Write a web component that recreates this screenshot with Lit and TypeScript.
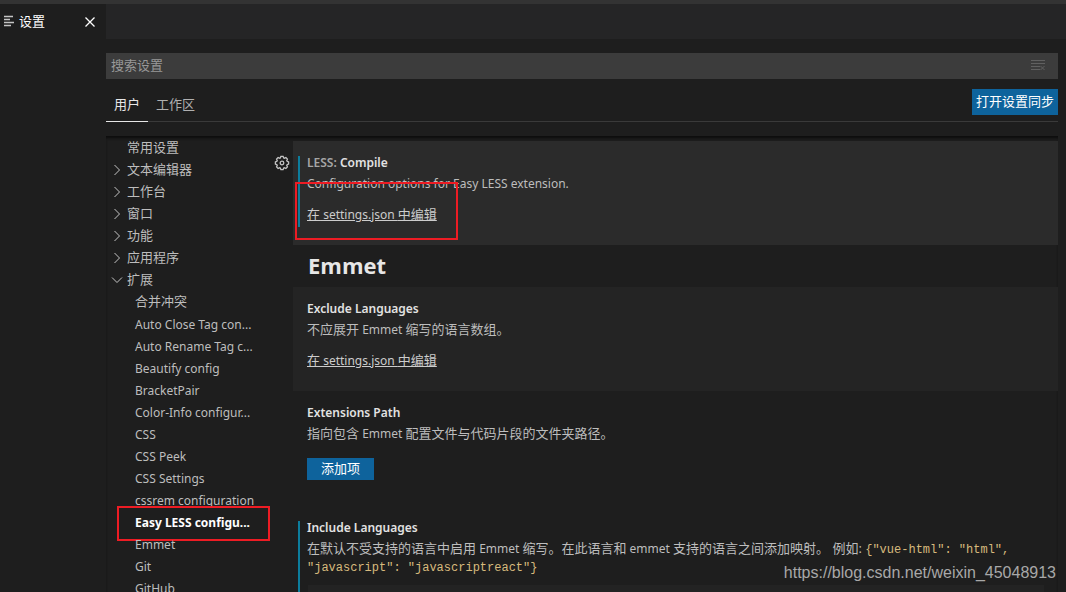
import { LitElement, html, svg, css } from "lit";
import { customElement } from "lit/decorators.js";

interface TocEntry {
  label: string;
  kind: "plain" | "closed" | "open" | "child";
  latin?: boolean;
  active?: boolean;
}

const TOC: TocEntry[] = [
  { label: "常用设置", kind: "plain" },
  { label: "文本编辑器", kind: "closed" },
  { label: "工作台", kind: "closed" },
  { label: "窗口", kind: "closed" },
  { label: "功能", kind: "closed" },
  { label: "应用程序", kind: "closed" },
  { label: "扩展", kind: "open" },
  { label: "合并冲突", kind: "child" },
  { label: "Auto Close Tag con...", kind: "child", latin: true },
  { label: "Auto Rename Tag c...", kind: "child", latin: true },
  { label: "Beautify config", kind: "child", latin: true },
  { label: "BracketPair", kind: "child", latin: true },
  { label: "Color-Info configur...", kind: "child", latin: true },
  { label: "CSS", kind: "child", latin: true },
  { label: "CSS Peek", kind: "child", latin: true },
  { label: "CSS Settings", kind: "child", latin: true },
  { label: "cssrem configuration", kind: "child", latin: true },
  { label: "Easy LESS configu...", kind: "child", latin: true, active: true },
  { label: "Emmet", kind: "child", latin: true },
  { label: "Git", kind: "child", latin: true },
  { label: "GitHub", kind: "child", latin: true },
];

const chevron = (open: boolean) => html`
  <svg class="chevron" viewBox="0 0 16 16" width="16" height="16" aria-hidden="true">
    ${open
      ? svg`<path d="M3 6.5l5 5 5-5" />`
      : svg`<path d="M5.5 4l5 5-5 5" />`}
  </svg>
`;

const teeth = [0, 45, 90, 135, 180, 225, 270, 315];

const gear = html`
  <svg viewBox="0 0 16 16" width="16" height="16" fill="none" stroke="currentColor" stroke-width="1.3" aria-hidden="true">
    ${teeth.map(
      (a) => svg`<path transform="rotate(${a} 8 8)" d="M6.1 3.4L6.9 1.4H9.1L9.9 3.4" />`
    )}
    <circle cx="8" cy="8" r="1.8" />
  </svg>
`;

@customElement("app-root")
export class AppRoot extends LitElement {
  static styles = css`
    :host {
      display: flex;
      flex-direction: column;
      position: relative;
      height: 100vh;
      overflow: hidden;
      background: #1e1e1e;
      color: #bdbdbd;
      font: 13px/18px "Open Sans", "Noto Sans CJK SC", sans-serif;
    }
    * { box-sizing: border-box; }
    button, input { font: inherit; border: 0; margin: 0; }
    button { cursor: pointer; }
    .latin { font-family: "Noto Sans", sans-serif; font-size: 12px; line-height: 1; }
    .titlebar { flex: none; height: 4px; background: #333333; }
    .tabs { flex: none; display: flex; height: 35px; background: #252526; }
    .tab {
      display: flex;
      align-items: center;
      width: 106px;
      padding: 0 8px 2px 3px;
      gap: 4px;
      background: #1e1e1e;
      color: #ffffff;
    }
    .tab-name { flex: 1; }
    .icon-button {
      display: flex;
      padding: 0;
      background: none;
      color: inherit;
    }
    .editor {
      flex: 1;
      min-height: 0;
      display: flex;
      flex-direction: column;
      padding: 14px 8px 0 106px;
    }
    .search {
      flex: none;
      display: flex;
      align-items: center;
      height: 26px;
      padding: 0 12px 2px 5px;
      background: #3c3c3c;
      color: #606060;
    }
    .search input {
      flex: 1;
      min-width: 0;
      padding: 0;
      background: none;
      outline: none;
      color: #cccccc;
    }
    .search input::placeholder { color: #989898; opacity: 1; }
    .scopes {
      flex: none;
      display: flex;
      align-items: flex-end;
      height: 43px;
      border-bottom: 1px solid #3a3a3a;
    }
    .scope {
      height: 33px;
      margin-bottom: -1px;
      padding: 0 8px 2px;
      background: none;
      color: #b0b0b0;
      border-bottom: 1px solid transparent;
    }
    .scope.on { color: #e7e7e7; border-bottom-color: #e7e7e7; }
    .primary { padding-top: 0; padding-bottom: 2px; background: #0e639c; color: #ffffff; }
    .sync {
      height: 26px;
      margin: 0 0 6px auto;
      padding-left: 4px;
      padding-right: 4px;
    }
    .body {
      flex: 1;
      min-height: 0;
      display: grid;
      grid-template-columns: 187px minmax(0, 1fr);
      margin-top: 14px;
      overflow: hidden;
      box-shadow: inset 0 3px 3px -1px #0c0c0c;
    }
    .toc {
      margin: 0;
      padding: 0 32px 0 3px;
      list-style: none;
    }
    .toc-row {
      position: relative;
      display: flex;
      align-items: center;
      height: 22px;
      gap: 2px;
    }
    .toc-row.plain { padding-left: 18px; }
    .toc-row.child { padding-left: 26px; }
    .toc-row.active { color: #ffffff; font-weight: 700; }
    .toc-label { white-space: nowrap; }
    .toc-label.latin { line-height: 18px; padding-top: 3px; }
    .chevron { flex: none; fill: none; stroke: #c5c5c5; stroke-width: 1; }
    .settings { padding-top: 5px; }
    .setting {
      position: relative;
      padding: 12px 14px 22px;
    }
    .setting.focused { background: #2b2b2b; }
    .setting.hovered { background: #242424; }
    .modified::before {
      content: "";
      position: absolute;
      left: 5px;
      top: 15px;
      bottom: 18px;
      width: 2px;
      background: #0c7d9d;
    }
    .gear {
      position: absolute;
      left: -19px;
      top: 14px;
      color: #c5c5c5;
    }
    h3 {
      margin: 0;
      font: 600 12px/20px "Noto Sans", sans-serif;
      color: #e2e2e2;
    }
    .category { color: #a6a6a6; }
    h2 {
      margin: 0;
      padding: 0 0 2px 15px;
      font-size: 22px;
      line-height: 40px;
      font-weight: 700;
      color: #e7e7e7;
    }
    p { margin: 1px 0 0; }
    .edit {
      display: table;
      margin-top: 13px;
      color: #cccccc;
      text-decoration: underline;
    }
    .add {
      display: block;
      height: 22px;
      margin-top: 16px;
      padding-left: 14px;
      padding-right: 14px;
    }
    .tall { padding-bottom: 26px; }
    code {
      font: 12px/1 "Liberation Mono", monospace;
      color: #d7ba7d;
    }
    .pairs {
      width: calc(100% - 1px);
      margin: 10px 0 0 1px;
      table-layout: fixed;
      border-collapse: collapse;
      background: #232323;
      line-height: 26px;
    }
    .pairs th { padding: 0 4px; text-align: left; }
    .pairs .key { width: 40%; }
    .mark {
      position: absolute;
      border: 2px solid #ed1c24;
      pointer-events: none;
    }
    .mark-edit { left: 2px; top: 41px; width: 163px; height: 58px; }
    .mark-toc { left: 8px; top: -4px; width: 153px; height: 35px; }
    .watermark {
      position: absolute;
      right: 10px;
      bottom: 9px;
      font: 16px/20px "Liberation Sans", Arial, sans-serif;
      color: #a8a8a8;
    }
  `;

  private tocRow(entry: TocEntry) {
    const branch = entry.kind === "closed" || entry.kind === "open";
    return html`
      <li class="toc-row ${entry.kind} ${entry.active ? "active" : ""}">
        ${branch ? chevron(entry.kind === "open") : ""}
        <span class="toc-label ${entry.latin ? "latin" : ""}">${entry.label}</span>
        ${entry.active ? html`<span class="mark mark-toc"></span>` : ""}
      </li>
    `;
  }

  render() {
    return html`
      <div class="titlebar"></div>
      <div class="tabs">
        <div class="tab">
          <svg width="12" height="12" viewBox="0 0 12 12" stroke="#c5c5c5" stroke-width="1.3" aria-hidden="true">
            <path d="M1 1.5h9M1 4.5h6M1 7.5h10M1 10.5h7" />
          </svg>
          <span class="tab-name">设置</span>
          <button class="icon-button" aria-label="关闭">
            <svg width="16" height="16" viewBox="0 0 16 16" stroke="#ffffff" stroke-width="1.3">
              <path d="M3.5 4.5l9 9M12.5 4.5l-9 9" />
            </svg>
          </button>
        </div>
      </div>
      <main class="editor">
        <div class="search">
          <input type="text" placeholder="搜索设置" aria-label="搜索设置" />
          <button class="icon-button" aria-label="清除设置搜索输入">
            <svg width="16" height="16" viewBox="0 0 16 16" fill="none" stroke="currentColor">
              <path d="M1 3.5h14M1 6.5h14M1 9.5h9M1 12.5h9M10.5 9l4 4M14.5 9l-4 4" />
            </svg>
          </button>
        </div>
        <div class="scopes">
          <button class="scope on">用户</button>
          <button class="scope">工作区</button>
          <button class="primary sync">打开设置同步</button>
        </div>
        <div class="body">
          <ul class="toc">
            ${TOC.map((e) => this.tocRow(e))}
          </ul>
          <div class="settings">
            <section class="setting focused modified">
              <button class="icon-button gear" aria-label="更多操作">${gear}</button>
              <h3><span class="category">LESS:</span> Compile</h3>
              <p><span class="latin">Configuration options for Easy LESS extension.</span></p>
              <a class="edit" href="#">在<span class="latin"> settings.json </span>中编辑</a>
              <span class="mark mark-edit"></span>
            </section>
            <h2>Emmet</h2>
            <section class="setting hovered">
              <h3>Exclude Languages</h3>
              <p>不应展开<span class="latin"> Emmet </span>缩写的语言数组。</p>
              <a class="edit" href="#">在<span class="latin"> settings.json </span>中编辑</a>
            </section>
            <section class="setting tall">
              <h3>Extensions Path</h3>
              <p>指向包含<span class="latin"> Emmet </span>配置文件与代码片段的文件夹路径。</p>
              <button class="primary add">添加项</button>
            </section>
            <section class="setting modified">
              <h3>Include Languages</h3>
              <p>
                在默认不受支持的语言中启用<span class="latin"> Emmet </span>缩写。在此语言和<span class="latin"> emmet </span>支持的语言之间添加映射。 例如:
                <code>{"vue-html": "html", "javascript": "javascriptreact"}</code>
              </p>
              <table class="pairs">
                <tr><th class="key">项</th><th>值</th></tr>
              </table>
            </section>
          </div>
        </div>
      </main>
      <div class="watermark">https://blog.csdn.net/weixin_45048913</div>
    `;
  }
}
